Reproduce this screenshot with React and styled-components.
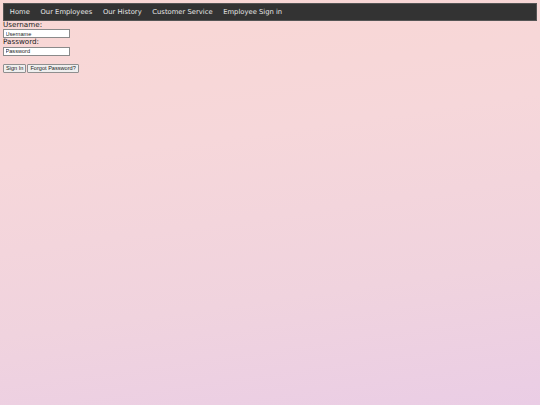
import styled, { createGlobalStyle } from 'styled-components';
import { useState } from 'react';

const GlobalStyle = createGlobalStyle`
  html, body {
    margin: 0;
    min-height: 100%;
  }
  body {
    background: linear-gradient(172deg, #f9d7d4 0%, #f6d7da 35%, #f0d3de 70%, #eacde5 100%);
    min-height: 405px;
    font-family: "DejaVu Sans", Verdana, sans-serif;
  }
`;

const Page = styled.div`
  padding: 3px;
`;

const NavBar = styled.ul`
  list-style: none;
  margin: 0;
  padding: 0 0 0 0.5px;
  display: flex;
  height: 15.5px;
  align-items: stretch;
  background-color: #333;
  border: 0.5px solid #555;
`;

const NavItem = styled.li`
  a {
    display: block;
    color: #e6e6e6;
    text-decoration: none;
    font-size: 6.8px;
    padding: 2px 5.3px 0;
    line-height: 13.5px;
  }
`;

const Form = styled.form`
  display: flex;
  flex-direction: column;
  align-items: flex-start;
`;

const Label = styled.label`
  color: #222;
  font-size: 7.2px;
  line-height: 8.6px;
`;

const Input = styled.input`
  box-sizing: border-box;
  width: 67px;
  height: 9.2px;
  margin: 0;
  padding: 0 1.5px;
  border: 0.7px solid #8a8a8a;
  background: #fff;
  font-family: "Liberation Sans", Arial, sans-serif;
  font-size: 5.6px;
  color: #222;
  &::placeholder {
    color: #222;
  }
`;

const ButtonRow = styled.div`
  display: flex;
  gap: 1px;
  margin-top: 7.5px;
`;

const Button = styled.button`
  box-sizing: border-box;
  height: 9.5px;
  margin: 0;
  padding: 0 2px;
  background: #efefef;
  border: 0.7px solid #8f8f8f;
  border-radius: 1px;
  font-family: "Liberation Sans", Arial, sans-serif;
  font-size: 5.6px;
  color: #222;
`;

const links = ['Home', 'Our Employees', 'Our History', 'Customer Service', 'Employee Sign in'];

function App() {
  const [username, setUsername] = useState('');
  const [password, setPassword] = useState('');

  return (
    <Page>
      <GlobalStyle />
      <NavBar>
        {links.map((l) => (
          <NavItem key={l}><a href="#">{l}</a></NavItem>
        ))}
      </NavBar>
      <Form onSubmit={(e) => e.preventDefault()}>
        <Label htmlFor="username">Username:</Label>
        <Input id="username" placeholder="Username" value={username} onChange={(e) => setUsername(e.target.value)} />
        <Label htmlFor="password">Password:</Label>
        <Input id="password" placeholder="Password" value={password} onChange={(e) => setPassword(e.target.value)} />
        <ButtonRow>
          <Button type="submit">Sign In</Button>
          <Button type="button">Forgot Password?</Button>
        </ButtonRow>
      </Form>
    </Page>
  );
}

export default App;
